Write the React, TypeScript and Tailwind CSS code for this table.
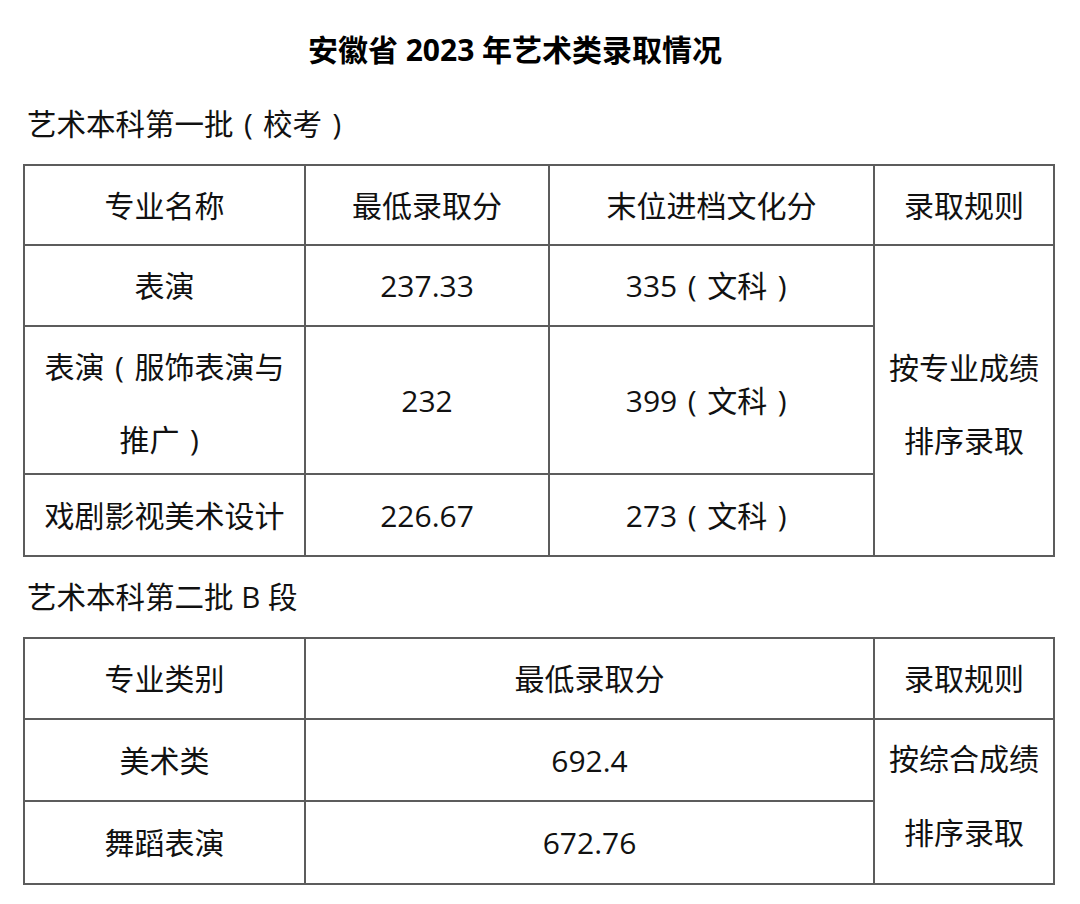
import React from "react";

const font = { fontFamily: '"Open Sans", "Noto Sans CJK SC", sans-serif' };

function L() {
  return <span className="inline-block w-[1em] text-center">(</span>;
}
function R() {
  return <span className="inline-block w-[1em] text-center">)</span>;
}

function Cell({ children, className = "" }: { children: React.ReactNode; className?: string }) {
  return (
    <div className={`bg-white flex items-center justify-center text-center text-[30px] text-[#111] ${className}`}>
      {children}
    </div>
  );
}

function Wenke({ n }: { n: string }) {
  return (
    <span>
      {n}
      <L />
      文科
      <R />
    </span>
  );
}

export default function App() {
  return (
    <div className="w-[1080px] h-[904px] bg-white text-[#111]" style={font}>
      <div className="h-[100px] flex items-center justify-center pr-[50px]">
        <h1 className="text-[30px] font-bold text-black leading-none">安徽省 2023 年艺术类录取情况</h1>
      </div>

      <div className="h-[48px] flex items-center pl-[27px] mb-[16px] text-[29.5px]">
        <span>
          艺术本科第一批
          <L />
          校考
          <R />
        </span>
      </div>

      <div className="ml-[23px] w-[1032px] grid grid-cols-[279px_242px_323px_178px] grid-rows-[78px_79px_146px_80px] gap-[2px] p-[2px] bg-[#5c5c5c]">
        <Cell>专业名称</Cell>
        <Cell>最低录取分</Cell>
        <Cell>末位进档文化分</Cell>
        <Cell>录取规则</Cell>

        <Cell>表演</Cell>
        <Cell>237.33</Cell>
        <Cell>
          <Wenke n="335" />
        </Cell>
        <Cell className="row-span-3 leading-[73px] pt-[6px]">
          <div>
            按专业成绩
            <br />
            排序录取
          </div>
        </Cell>

        <Cell className="leading-[73px] pt-[6px]">
          <div>
            表演
            <L />
            服饰表演与
            <br />
            推广
            <R />
          </div>
        </Cell>
        <Cell>232</Cell>
        <Cell>
          <Wenke n="399" />
        </Cell>

        <Cell>戏剧影视美术设计</Cell>
        <Cell>226.67</Cell>
        <Cell>
          <Wenke n="273" />
        </Cell>
      </div>

      <div className="h-[48px] flex items-center pl-[27px] mt-[16px] mb-[16px] text-[29.5px]">艺术本科第二批 B 段</div>

      <div className="ml-[23px] w-[1032px] grid grid-cols-[279px_567px_178px] grid-rows-[79px_80px_81px] gap-[2px] p-[2px] bg-[#5c5c5c]">
        <Cell>专业类别</Cell>
        <Cell>最低录取分</Cell>
        <Cell>录取规则</Cell>

        <Cell>美术类</Cell>
        <Cell>692.4</Cell>
        <Cell className="row-span-2 leading-[74px] pb-[12px]">
          <div>
            按综合成绩
            <br />
            排序录取
          </div>
        </Cell>

        <Cell>舞蹈表演</Cell>
        <Cell>672.76</Cell>
      </div>
    </div>
  );
}
